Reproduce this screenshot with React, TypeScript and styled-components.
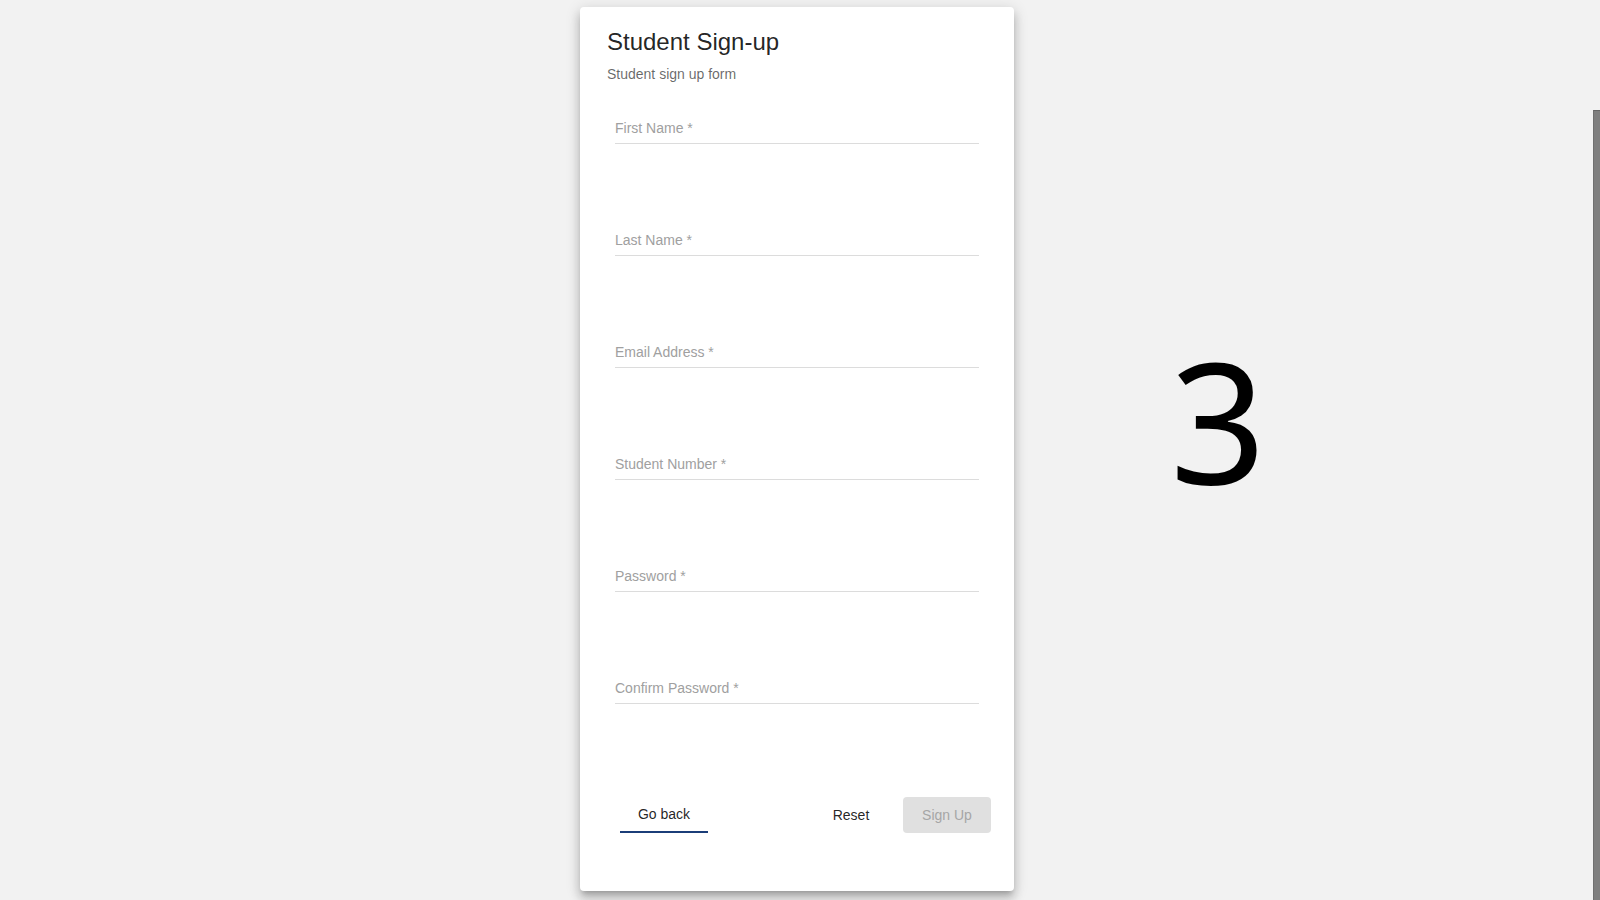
import React from "react";
import styled, { createGlobalStyle } from "styled-components";

const GlobalStyle = createGlobalStyle`
  html, body {
    margin: 0;
    padding: 0;
    background: #f2f2f2;
    font-family: "Liberation Sans", Arial, sans-serif;
    overflow: hidden;
  }
  * { box-sizing: border-box; }
`;

const Page = styled.div`
  display: grid;
  grid-template-columns: 580px 434px 1fr;
  height: 900px;
`;

const Card = styled.form`
  grid-column: 2;
  margin-top: 7px;
  height: 884px;
  background: #fff;
  border-radius: 4px;
  box-shadow: 0px 5px 5px -3px rgba(0, 0, 0, 0.2),
    0px 8px 10px 1px rgba(0, 0, 0, 0.14), 0px 3px 14px 2px rgba(0, 0, 0, 0.12);
  padding: 19px 23px 0 27px;
  display: flex;
  flex-direction: column;
`;

const Title = styled.h1`
  margin: 0;
  font-size: 24px;
  line-height: 32px;
  font-weight: 400;
  color: rgba(0, 0, 0, 0.87);
`;

const Subtitle = styled.p`
  margin: 6px 0 0;
  font-size: 14px;
  line-height: 20px;
  color: rgba(0, 0, 0, 0.6);
`;

const Fields = styled.div`
  margin-top: 27px;
  display: flex;
  flex-direction: column;
  gap: 79px;
  padding: 0 12px 0 8px;
`;

const Input = styled.input`
  display: block;
  width: 100%;
  height: 33px;
  padding: 1px 0 0;
  border: none;
  border-bottom: 1px solid #dcdcdc;
  background: transparent;
  font-family: "Liberation Sans", Arial, sans-serif;
  font-size: 14px;
  color: rgba(0, 0, 0, 0.87);
  outline: none;
  &::placeholder {
    color: #a0a0a0;
    opacity: 1;
  }
`;

const Actions = styled.div`
  margin-top: 93px;
  padding-left: 13px;
  display: flex;
  justify-content: space-between;
  align-items: center;
`;

const RightGroup = styled.div`
  display: flex;
  gap: 20px;
`;

const Button = styled.button<{ $variant: "link" | "text" | "disabled" }>`
  height: 36px;
  min-width: 64px;
  padding: 0 8px;
  border: none;
  border-radius: ${(p) => (p.$variant === "link" ? "0" : "4px")};
  font-family: "Liberation Sans", Arial, sans-serif;
  font-size: 14px;
  cursor: pointer;
  width: ${(p) => (p.$variant === "text" ? "64px" : "88px")};
  background: ${(p) => (p.$variant === "disabled" ? "#e0e0e0" : "transparent")};
  color: ${(p) => (p.$variant === "disabled" ? "#a6a6a6" : "rgba(0,0,0,0.87)")};
  border-bottom: ${(p) => (p.$variant === "link" ? "2px solid #1b3d78" : "none")};
`;

const Side = styled.div`
  grid-column: 3;
  padding: 335px 0 0 156px;
`;

const Digit = styled.div`
  font-family: "Noto Sans", "Open Sans", sans-serif;
  font-size: 168px;
  line-height: 1;
  color: #000;
`;

const ScrollThumb = styled.div`
  position: fixed;
  right: 0;
  top: 110px;
  bottom: 0;
  width: 7px;
  background: #7f7f7f;
  border-top: 1px solid #666;
  border-left: 1px solid #707070;
`;

const fields = [
  "First Name *",
  "Last Name *",
  "Email Address *",
  "Student Number *",
  "Password *",
  "Confirm Password *",
];

export default function App() {
  return (
    <>
      <GlobalStyle />
      <Page>
        <Card onSubmit={(e) => e.preventDefault()}>
          <Title>Student Sign-up</Title>
          <Subtitle>Student sign up form</Subtitle>
          <Fields>
            {fields.map((f) => (
              <Input
                key={f}
                placeholder={f}
                type={f.includes("Password") ? "password" : "text"}
              />
            ))}
          </Fields>
          <Actions>
            <Button type="button" $variant="link">
              Go back
            </Button>
            <RightGroup>
              <Button type="reset" $variant="text">
                Reset
              </Button>
              <Button type="submit" $variant="disabled" disabled>
                Sign Up
              </Button>
            </RightGroup>
          </Actions>
        </Card>
        <Side>
          <Digit>3</Digit>
        </Side>
      </Page>
      <ScrollThumb />
    </>
  );
}
